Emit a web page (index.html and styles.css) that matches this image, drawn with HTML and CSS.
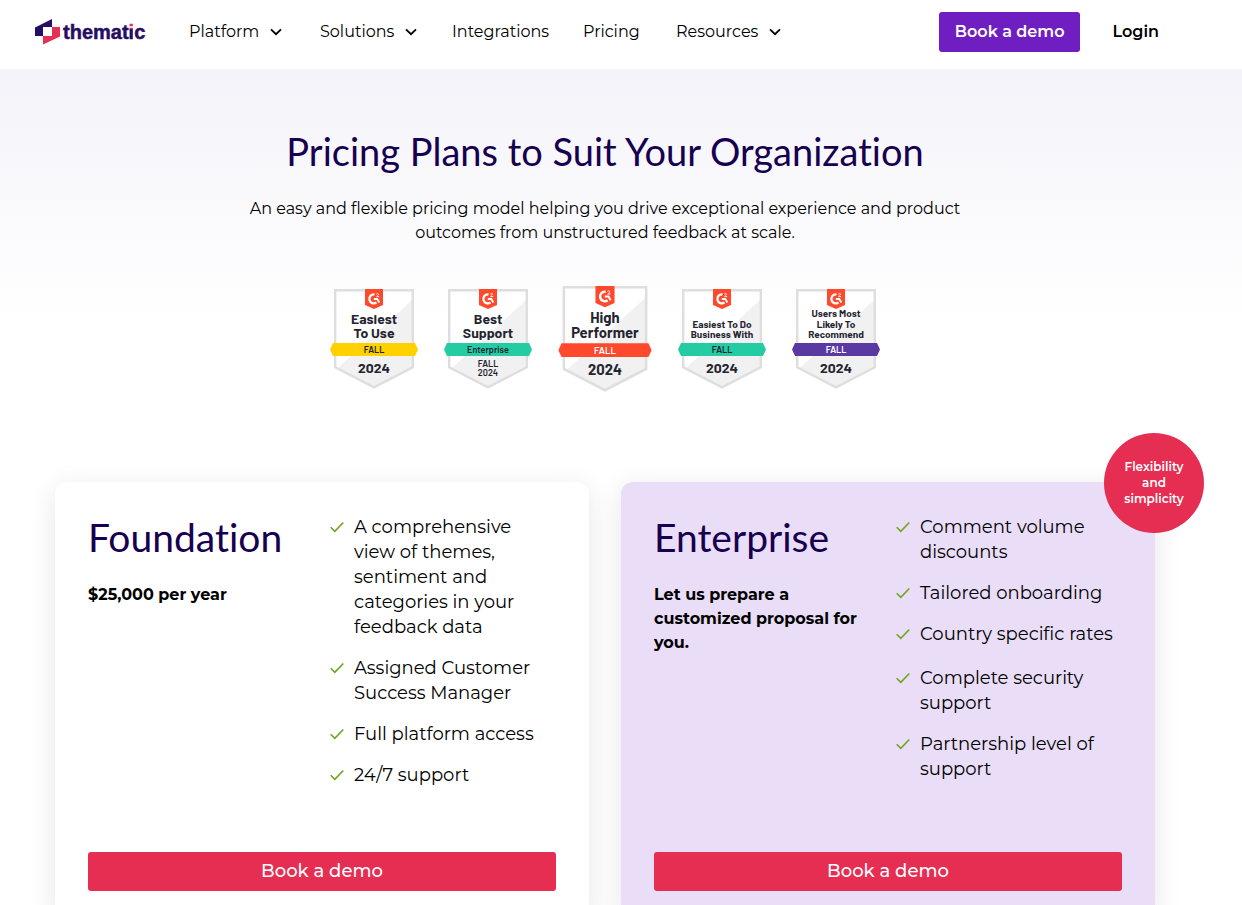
FILE: index.html
```html
<!DOCTYPE html>
<html lang="en">
<head>
<meta charset="utf-8">
<title>Pricing | Thematic</title>
<meta name="viewport" content="width=device-width, initial-scale=1">
<link rel="stylesheet" href="styles.css">
</head>
<body>
<svg class="defs" aria-hidden="true">
  <symbol id="chevron" viewBox="0 0 12 8"><path d="M1 1.300 6 6.200l5-4.900" fill="none" stroke="currentColor" stroke-width="1.800"/></symbol>
  <symbol id="check" viewBox="0 0 14 12"><path d="M.7 6.300 4.800 10.300 13.300 1.500" fill="none" stroke="#6fa521" stroke-width="1.600"/></symbol>
  <symbol id="shield" viewBox="0 0 88 100">
    <path d="M5 1H83V78L44 98.500 5 78Z" fill="#fff"/>
    <path d="M82 11V78L44 97.500 8 79Z" fill="#f1f1f2"/>
    <path d="M5.200 1.200H82.800V78.300L44 98.300 5.200 78.300Z" fill="none" stroke="#dededf" stroke-width="2.400"/>
    <path d="M35 0H53V16L44 20 35 16Z" fill="#ff492c"/>
    <path d="M44.500 5.400A4.500 4.500 0 1 0 46.500 13.500" fill="none" stroke="#fff" stroke-width="2.300"/>
    <path d="M43.800 10H47.300L49.300 13.400" fill="none" stroke="#fff" stroke-width="1.900"/>
    <path d="M46.300 5.200Q47.400 4 48.300 4.800T46.600 7.600H49.200" fill="none" stroke="#fff" stroke-width=".9"/>
  </symbol>
  <symbol id="ribbon" viewBox="0 0 88 100"><path d="M3 54H85L88 60.500 85 67H3L0 60.500Z" fill="currentColor"/></symbol>
</svg>

<header class="site-header">
  <a class="logo" href="#" aria-label="Thematic home">
    <svg class="logo-mark" viewBox="0 0 25 26" aria-hidden="true">
      <path d="M0 8.500 17 0V8H8V17H0Z" fill="#260f63"/>
      <path d="M17 8H25V17.500L8 25.500V17H17Z" fill="#e72e53"/>
    </svg>
    <span class="logo-word">themat<span class="logo-i">i</span>c</span>
  </a>
  <nav class="nav" aria-label="Main">
    <button class="nav-item" type="button">Platform <svg class="chevron"><use href="#chevron"/></svg></button>
    <button class="nav-item" type="button">Solutions <svg class="chevron"><use href="#chevron"/></svg></button>
    <a class="nav-item" href="#">Integrations</a>
    <a class="nav-item" href="#">Pricing</a>
    <button class="nav-item" type="button">Resources <svg class="chevron"><use href="#chevron"/></svg></button>
  </nav>
  <div class="account">
    <a class="demo-link" href="#">Book a demo</a>
    <a class="login" href="#">Login</a>
  </div>
</header>

<main class="page">
  <section class="hero">
    <h1 class="display">Pricing Plans to Suit Your Organization</h1>
    <p class="lead">An easy and flexible pricing model helping you drive exceptional experience and product outcomes from unstructured feedback at scale.</p>
    <div class="badges">
      <svg class="badge" viewBox="0 0 88 100"><use href="#shield"/><use href="#ribbon" color="#ffd100"/>
        <text class="t-lg" x="44" y="35">Easiest</text><text class="t-lg" x="44" y="49">To Use</text>
        <text class="t-sm" x="44" y="64">FALL</text><text class="t-lg" x="44" y="84">2024</text></svg>
      <svg class="badge" viewBox="0 0 88 100"><use href="#shield"/><use href="#ribbon" color="#23cca2"/>
        <text class="t-lg" x="44" y="35">Best</text><text class="t-lg" x="44" y="49">Support</text>
        <text class="t-sm" x="44" y="64">Enterprise</text><text class="t-sm" x="44" y="78">FALL</text><text class="t-sm" x="44" y="87">2024</text></svg>
      <svg class="badge badge-large" viewBox="0 0 88 100"><use href="#shield"/><use href="#ribbon" color="#ff492c"/>
        <text class="t-lg" x="44" y="35">High</text><text class="t-lg" x="44" y="49">Performer</text>
        <text class="t-sm t-light" x="44" y="64">FALL</text><text class="t-lg" x="44" y="84">2024</text></svg>
      <svg class="badge" viewBox="0 0 88 100"><use href="#shield"/><use href="#ribbon" color="#23cca2"/>
        <text class="t-md" x="44" y="39">Easiest To Do</text><text class="t-md" x="44" y="49">Business With</text>
        <text class="t-sm" x="44" y="64">FALL</text><text class="t-lg" x="44" y="84">2024</text></svg>
      <svg class="badge" viewBox="0 0 88 100"><use href="#shield"/><use href="#ribbon" color="#5a39a2"/>
        <text class="t-md" x="44" y="28">Users Most</text><text class="t-md" x="44" y="39">Likely To</text><text class="t-md" x="44" y="49">Recommend</text>
        <text class="t-sm t-light" x="44" y="64">FALL</text><text class="t-lg" x="44" y="84">2024</text></svg>
    </div>
  </section>

  <section class="plans" aria-label="Plans">
    <article class="plan">
      <div class="plan-body">
        <div class="plan-intro">
          <h2 class="display">Foundation</h2>
          <p class="price">$25,000 per year</p>
        </div>
        <div class="features">
          <ul class="feature-list">
            <li><svg class="check"><use href="#check"/></svg>A comprehensive view of themes, sentiment and categories in your feedback data</li>
            <li><svg class="check"><use href="#check"/></svg>Assigned Customer Success Manager</li>
            <li><svg class="check"><use href="#check"/></svg>Full platform access</li>
            <li><svg class="check"><use href="#check"/></svg>24/7 support</li>
          </ul>
        </div>
      </div>
      <a class="plan-cta" href="#">Book a demo</a>
    </article>
    <article class="plan plan-enterprise">
      <p class="sticker">Flexibility and simplicity</p>
      <div class="plan-body">
        <div class="plan-intro">
          <h2 class="display">Enterprise</h2>
          <p class="price">Let us prepare a customized proposal for you.</p>
        </div>
        <div class="features">
          <ul class="feature-list">
            <li><svg class="check"><use href="#check"/></svg>Comment volume discounts</li>
            <li><svg class="check"><use href="#check"/></svg>Tailored onboarding</li>
            <li><svg class="check"><use href="#check"/></svg>Country specific rates</li>
          </ul>
          <ul class="feature-list">
            <li><svg class="check"><use href="#check"/></svg>Complete security support</li>
            <li><svg class="check"><use href="#check"/></svg>Partnership level of support</li>
          </ul>
        </div>
      </div>
      <a class="plan-cta" href="#">Book a demo</a>
    </article>
  </section>
</main>
</body>
</html>
```
FILE: styles.css
```css
* { box-sizing: border-box; }

body {
  margin: 0;
  background: #fff;
  color: #000;
  font: 400 16px/24px Montserrat, Inter, sans-serif;
}

h1, h2, p, ul { margin: 0; padding: 0; }
a { color: inherit; text-decoration: none; }
.defs { display: none; }

.site-header {
  display: flex;
  align-items: center;
  height: 69px;
  padding: 0 83px 6px 35px;
}

.logo { display: flex; align-items: center; gap: 3px; width: 154px; }
.logo-mark { width: 25px; height: 26px; }
.logo-word {
  color: #260f63;
  font: 700 20px/24px "Liberation Sans", Arial, sans-serif;
  -webkit-text-stroke: 0.5px;
}
.logo-i {
  background: linear-gradient(#e72e53 35%, #260f63 35%);
  -webkit-background-clip: text;
  background-clip: text;
  color: transparent;
}

.nav { display: grid; grid-template-columns: 131px 132px 131px 93px auto; }
.nav-item {
  display: flex;
  align-items: center;
  gap: 11px;
  padding: 0;
  border: 0;
  background: none;
  color: inherit;
  font: inherit;
  text-align: left;
  cursor: pointer;
}
.chevron { width: 12px; height: 8px; }

.account { display: flex; align-items: center; gap: 32px; margin-left: auto; font-weight: 600; }
.demo-link {
  padding: 8px 16px;
  border-radius: 3px;
  background: #6f1fc1;
  color: #fff;
}

.page {
  padding: 56px 32px 48px 0;
  background: linear-gradient(#f4f3f9, #fff 256px);
}

.hero { text-align: center; }
.display {
  color: #170050;
  font: 400 38px/52px Lato, sans-serif;
  font-variant-ligatures: none;
}
.lead { max-width: 740px; margin: 20px auto 0; }

.badges {
  display: flex;
  justify-content: center;
  align-items: center;
  gap: 26px;
  margin-top: 41px;
}
.badge { width: 88px; height: 100px; }
.badge-large { width: 94px; height: 106px; }
.badge text {
  fill: #252530;
  font-family: "Barlow", Roboto, sans-serif;
  font-weight: 700;
  text-anchor: middle;
}
.badge .t-lg { font-size: 14px; }
.badge .t-md { font-size: 10px; }
.badge .t-sm { font-size: 9px; font-weight: 600; }
.badge .t-light { fill: #fff; }

.plans {
  display: grid;
  grid-template-columns: 1fr 1fr;
  gap: 32px;
  max-width: 1100px;
  margin: 90px auto 0;
}
.plan {
  position: relative;
  display: flex;
  flex-direction: column;
  gap: 64px;
  padding: 33px;
  border-radius: 12px;
  background: #fff;
  box-shadow: 0 6px 28px rgba(0, 0, 0, .1);
}
.plan-enterprise { background: #e9ddf7; }
.plan-body {
  display: grid;
  grid-template-columns: 210fr 226fr;
  gap: 32px;
}
.plan-intro { display: flex; flex-direction: column; gap: 24px; }
.plan-intro .display { font-size: 39px; line-height: 44px; }
.price { font-weight: 700; }

.features { display: flex; flex-direction: column; gap: 19px; }
.feature-list {
  display: flex;
  flex-direction: column;
  gap: 16px;
  list-style: none;
  font-size: 18px;
  line-height: 25px;
}
.feature-list li { display: flex; gap: 10px; }
.check { flex: none; width: 14px; height: 12px; margin-top: 6px; }

.plan-cta {
  margin-top: auto;
  padding: 7px 16px 8px;
  border-radius: 3px;
  background: #e62d52;
  color: #fff;
  font-size: 18px;
  font-weight: 500;
  text-align: center;
}

.sticker {
  position: absolute;
  top: -49px;
  right: -49px;
  display: grid;
  place-content: center;
  width: 100px;
  height: 100px;
  padding: 0 16px;
  border-radius: 50%;
  background: #e62d52;
  color: #fff;
  font-size: 12px;
  font-weight: 600;
  line-height: 16px;
  text-align: center;
}
```
